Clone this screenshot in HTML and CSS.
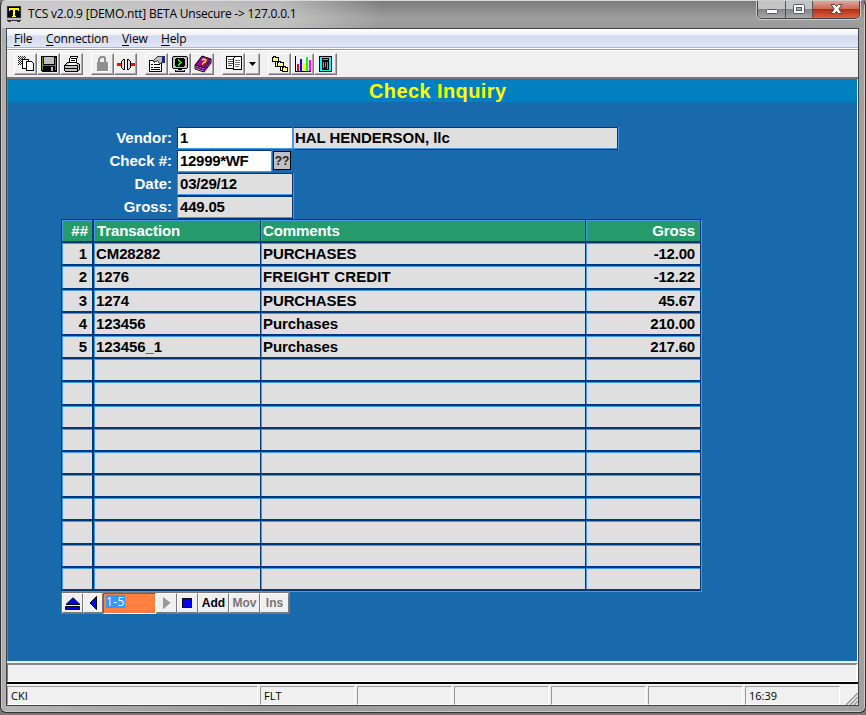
FILE: index.html
```html
<!DOCTYPE html>
<html lang="en">
<head>
<meta charset="utf-8">
<title>TCS v2.0.9</title>
<link rel="stylesheet" href="styles.css">
</head>
<body>
<div class="window">
  <header class="titlebar">
    <svg class="app-icon" width="16" height="16" viewBox="0 0 16 16" shape-rendering="crispEdges"><path fill="#333" d="M1 0h14v12H1z"/><path fill="#000" d="M2 1h12v10H2z"/><path fill="#ff0" d="M3 2h10v3h-1V4H9v6h1v1H6v-1h1V4H4v1H3z"/><path fill="#bbb" d="M0 1h1v10H0zM15 1h1v10h-1zM0 12h16v2H0z"/><path fill="#333" d="M1 14h14v1H1zM2 15h3v1H2zM11 15h3v1h-3z"/></svg>
    <span class="caption">TCS v2.0.9 [DEMO.ntt] BETA Unsecure -&gt; 127.0.0.1</span>
    <div class="controls">
      <span class="control min"><svg width="14" height="8"><rect x="1.5" y="2.5" width="11" height="4" rx="1" fill="#fff" stroke="#555868"/></svg></span>
      <span class="control max"><svg width="13" height="11"><rect x=".5" y=".5" width="11" height="9" rx="1" fill="#fff" stroke="#555868"/><rect x="3.5" y="3.5" width="5" height="3" fill="#aaa" stroke="#555868"/></svg></span>
      <span class="control close"><svg width="13" height="11" viewBox="0 0 13 11"><path d="M1 .5h3.5l2 2 2-2H12L8.8 5l3.2 4.5H8.5l-2-2-2 2H1L4.2 5z" fill="#fff" stroke="#574247"/></svg></span>
    </div>
  </header>
  <main class="client">
    <nav class="menu"><span class="m-file"><u>F</u>ile</span><span class="m-conn"><u>C</u>onnection</span><span class="m-view"><u>V</u>iew</span><span class="m-help"><u>H</u>elp</span></nav>
    <div class="toolbar">
      <div class="group">
        <button class="tool"><svg width="18" height="18" viewBox="0 0 18 18" shape-rendering="crispEdges"><path d="M1 1.500h7M2 2.500h7M1 3.500h7M2 4.500h4M1 5.500h4M2 6.500h3M1 7.500h4M2 8.500h3M1 9.500h4" stroke="#222" stroke-dasharray="1 1"/><path d="M5.500 4.500h6v9h-6z" fill="#fff" stroke="#000"/><path d="M9.500 6.500h5l2 2v7h-7z" fill="#fff" stroke="#000"/></svg></button>
        <button class="tool"><svg width="18" height="18" viewBox="0 0 18 18" shape-rendering="crispEdges"><path d="M1 1h16v16H2l-1-1z"/><path fill="#808000" d="M2 2h1v13H2zM15 3h1v12h-1zM3 10h12v1H3z"/><path fill="#c0c0c0" d="M4 2h10v7H4zM11 12h2v4h-2z"/></svg></button>
        <button class="tool"><svg width="18" height="18" viewBox="0 0 18 18" shape-rendering="crispEdges"><path d="M5.500 8.500l2-7h7l-2 7z" fill="#fff" stroke="#000"/><path d="M8 3.500h5M8 5.500h4" stroke="#000"/><path d="M1.500 10.500l3-3h9l3 2v5l-2 2h-12l-1-1z" fill="#c0c0c0" stroke="#000"/><path d="M6 8h7l-1 2H5z" fill="#fff"/><path d="M2 10.500h12v5M2 13.500h12" fill="none" stroke="#000"/><path d="M9 12h3" stroke="#cc0"/></svg></button>
      </div>
      <div class="group">
        <button class="tool"><svg width="18" height="18" viewBox="0 0 18 18" shape-rendering="crispEdges"><path fill="#909090" d="M4 3l2-2h4l2 2v4h2v9H3V7h1z"/><path fill="#eee" d="M6 4l1-1h2l1 1v3H6z"/><path d="M14.500 8v8.500H4" fill="none" stroke="#fff"/></svg></button>
        <button class="tool"><svg width="18" height="18" viewBox="0 0 18 18" shape-rendering="crispEdges"><path fill="#f00" d="M0 8h4v3H0zM14 8h4v3h-4z"/><path d="M4.500 6.500l2-2h1v10h-1l-2-2zM10.500 4.500h1l2 2v6l-2 2h-1z" fill="#ddd" stroke="#000"/></svg></button>
      </div>
      <div class="group">
        <button class="tool"><svg width="18" height="18" viewBox="0 0 18 18" shape-rendering="crispEdges"><path d="M1.500 5.500h12v11h-12z" fill="#fff" stroke="#000"/><path d="M3 9.500h2M6 9.500h6M3 12.500h2M6 12.500h6M3 14.500h9" stroke="#000"/><path d="M5.500 5.500l4-4h5v6l-3 1-2-3-3 2z" fill="#c0c0c0" stroke="#444"/><path fill="#228" d="M14 1h3v7h-3z"/></svg></button>
        <button class="tool"><svg width="18" height="18" viewBox="0 0 18 18" shape-rendering="crispEdges"><rect x="1.500" y="1.500" width="15" height="12" rx="2" fill="#c0c0c0" stroke="#000"/><rect x="4" y="3" width="10" height="9" rx="3"/><path d="M7 4.500l3 3-3 3" fill="none" stroke="#0f0"/><path fill="#000" d="M7 14h4v1H7zM4 15h10v2H4z"/><path fill="#aaa" d="M5 15h8v1H5z"/></svg></button>
        <button class="tool"><svg width="18" height="18" viewBox="0 0 18 18"><path d="M1 10L8 1l9 3-7 9z" fill="#a000a0" stroke="#000"/><path d="M1 10v4l9 3 7-9V4l-7 9z" fill="#fff" stroke="#000"/><path d="M1.500 12l8.500 3 6.500-8.500" fill="none" stroke="#800080" stroke-width="2"/><path d="M8 5l2-1 2 1-1 2-2 1M8 9h1" fill="none" stroke="#ff0" stroke-width="1.500"/></svg></button>
      </div>
      <div class="group">
        <button class="tool wide"><svg width="18" height="18" viewBox="0 0 18 18" shape-rendering="crispEdges"><path d="M1.500 1.500h8v12h-8z" fill="#fff" stroke="#000"/><path d="M3 4.500h5M3 6.500h5M3 8.500h5M3 10.500h4" stroke="#555"/><path d="M8.500 3.500l2-2h6v13h-8z" fill="#fff" stroke="#000"/><path d="M10 5.500h5M10 7.500h5M10 9.500h5M10 11.500h4" stroke="#777"/></svg></button>
        <button class="tool drop"><svg width="7" height="4"><path d="M0 0h7L3.500 4z"/></svg></button>
      </div>
      <div class="group">
        <button class="tool"><svg width="18" height="18" viewBox="0 0 18 18" shape-rendering="crispEdges"><path d="M4 7v4h3M9 11v4h3" fill="none" stroke="#000"/><path d="M1.500 2.500h1v-1h2v1h3v4h-6zM6.500 7.500h1v-1h2v1h3v4h-6zM11.500 12.500h1v-1h2v1h2v4h-5z" fill="#ff6" stroke="#000"/></svg></button>
        <button class="tool"><svg width="18" height="18" viewBox="0 0 18 18" shape-rendering="crispEdges"><path d="M1.500 1v15.500H17" fill="none" stroke="#000"/><path fill="#f00" d="M3 9h2v7H3z"/><path fill="#00f" d="M6 4h2v12H6z"/><path fill="#ff0" d="M9 8h2v8H9z"/><path fill="#0f0" d="M12 2h2v14h-2z"/><path fill="#f0f" d="M15 5h2v11h-2z"/></svg></button>
        <button class="tool"><svg width="18" height="18" viewBox="0 0 18 18" shape-rendering="crispEdges"><path d="M2 1h13v16H2z"/><path fill="#0ff" d="M3 2h11v14H3z"/><path d="M5 3h7v12H5z"/><path fill="#0cc" d="M6 4h5v1H6zM6 7h1v6H6zM8 7h1v5H8zM10 7h1v7h-1z"/></svg></button>
      </div>
    </div>
    <section class="form">
      <h1>Check Inquiry</h1>
      <div class="fields">
        <label>Vendor:</label><div class="line"><span class="field edit vendor">1</span><span class="field name">HAL HENDERSON, llc</span></div>
        <label>Check #:</label><div class="line"><span class="field edit check">12999*WF</span><span class="lookup">??</span></div>
        <label>Date:</label><div class="line"><span class="field short">03/29/12</span></div>
        <label>Gross:</label><div class="line"><span class="field short">449.05</span></div>
      </div>
      <div class="grid">
        <div class="row head"><span class="n">##</span><span class="t">Transaction</span><span>Comments</span><span class="g">Gross</span></div>
        <div class="row"><span class="n">1</span><span>CM28282</span><span>PURCHASES</span><span class="g">-12.00</span></div>
        <div class="row"><span class="n">2</span><span>1276</span><span class="loose">FREIGHT CREDIT</span><span class="g">-12.22</span></div>
        <div class="row"><span class="n">3</span><span>1274</span><span>PURCHASES</span><span class="g">45.67</span></div>
        <div class="row"><span class="n">4</span><span>123456</span><span>Purchases</span><span class="g">210.00</span></div>
        <div class="row"><span class="n">5</span><span>123456_1</span><span>Purchases</span><span class="g">217.60</span></div>
        <div class="row"><span></span><span></span><span></span><span></span></div>
        <div class="row"><span></span><span></span><span></span><span></span></div>
        <div class="row"><span></span><span></span><span></span><span></span></div>
        <div class="row"><span></span><span></span><span></span><span></span></div>
        <div class="row"><span></span><span></span><span></span><span></span></div>
        <div class="row"><span></span><span></span><span></span><span></span></div>
        <div class="row"><span></span><span></span><span></span><span></span></div>
        <div class="row"><span></span><span></span><span></span><span></span></div>
        <div class="row"><span></span><span></span><span></span><span></span></div>
        <div class="row"><span></span><span></span><span></span><span></span></div>
      </div>
      <div class="pager">
        <button class="b-top"><svg width="16" height="13"><path d="M1 7.500L8 .8l7 6.700z" fill="#00f" stroke="#000"/><path d="M.5 9.500h14v3H.5z" fill="#00f" stroke="#000"/></svg></button>
        <button class="b-prev"><svg width="9" height="14"><path d="M7.500.5v13L1 7z" fill="#00f" stroke="#000"/></svg></button>
        <div class="range"><span>1-5</span></div>
        <button class="b-next"><svg width="10" height="15"><path d="M1 1v13l8-7z" fill="#999"/><path d="M1 14l8-7" stroke="#fff"/></svg></button>
        <button class="b-stop"><svg width="11" height="11"><path d="M.5.5h9v9h-9z" fill="#00f" stroke="#000"/></svg></button>
        <button class="b-add">Add</button>
        <button class="b-mov off">Mov</button>
        <button class="b-ins off">Ins</button>
      </div>
    </section>
    <div class="message"></div>
    <footer class="status"><span>CKI</span><span>FLT</span><span></span><span></span><span></span><span></span><span>16:39</span><svg width="12" height="12" viewBox="0 0 12 12"><path d="M0 12L12 0M4 12l8-8M8 12l4-4" stroke="#999" stroke-width="1.500"/></svg></footer>
  </main>
</div>
</body>
</html>
```
FILE: styles.css
```css
* { box-sizing: border-box; }
body { margin: 0; background: #77777a; overflow: hidden; }
.window { width: 866px; height: 713px; padding: 0 6px 6px 5px; display: flex; flex-direction: column;
  background: linear-gradient(90deg, #aaa 0, #b5b5b5 6px, #999 30%, #a5a5a5 60%, #a0a0a0 100%);
  border: 1px solid #333; border-top-color: #d8dcda; border-radius: 6px; box-shadow: inset 0 0 0 1px #c8c8c8; }
.titlebar { height: 27px; flex: none; display: flex; align-items: flex-start; margin: 0 -5px 0 -4px; padding-left: 4px;
  background: linear-gradient(90deg, rgba(218,218,218,.85) 0, rgba(210,210,210,.7) 280px, rgba(150,150,150,.1) 380px, rgba(150,150,150,.1)), linear-gradient(#777, #a0a0a0 65%, #999); }
.app-icon { margin: 5px 6px 0 0; }
.caption { font: 12px/16px "Open Sans", sans-serif; padding-top: 5px; white-space: nowrap; letter-spacing: -.2px; color: #000; }
.controls { margin-left: auto; margin-right: 4px; height: 18px; width: 103px; display: flex; border: 1px solid #444; border-top: 0; border-radius: 0 0 5px 5px; box-shadow: 0 0 0 1px #ccc; overflow: hidden; }
.control { display: flex; align-items: center; justify-content: center; border-right: 1px solid #555; background: linear-gradient(#c4c4c4 45%, #858585 50%, #aaa); }
.min { width: 28px; padding-top: 2px; } .max { width: 27px; }
.close { flex: 1; border: 0; background: linear-gradient(#dda79b, #c96c57 45%, #b22f14 50%, #d9663e); }
.client { width: 853px; height: 678px; flex: none; display: flex; flex-direction: column; background: #f0f0f0; border: 1px solid #444; }
.menu { height: 21px; flex: none; display: flex; padding-left: 7px; font: 12px/20px "Open Sans", sans-serif; letter-spacing: -.15px; color: #000; border-bottom: 1px solid #999; background: linear-gradient(#fff 0, #eef1f8 6px, #d4daed 7px, #e1e6f6 18px, #aeb5cc 18px, #aeb5cc 19px, #fff 19px); }
.m-file { width: 32px; } .m-conn { width: 76px; } .m-view { width: 39px; }
u { text-underline-offset: 2px; }
.toolbar { height: 29px; flex: none; display: flex; gap: 8px; padding: 2px 0 0 7px; border-top: 1px solid #fff; border-bottom: 2px solid #777; }
.group { display: flex; }
button { font: inherit; padding: 0; margin: 0; display: flex; align-items: center; justify-content: center; background: #f0f0f0; border: 1px solid #fff; border-right-color: #777; border-bottom-color: #777; }
.tool { width: 23px; height: 22px; box-shadow: inset -1px -1px #aaa; }
.tool.drop { width: 15px; }
.form { height: 582px; flex: none; background: #186aad; border-left: 1px solid #777; border-right: 1px solid #fff; font: bold 15px/20px "Liberation Sans", sans-serif; letter-spacing: -.1px; }
h1 { margin: 0; height: 23px; font-size: 20px; line-height: 25px; letter-spacing: .4px; color: #ff0; background: #0080c0; padding-left: 361px; }
.fields { display: grid; grid-template-columns: 164px 460px; grid-template-rows: repeat(4, 23px); column-gap: 5px; height: 92px; margin-top: 25px; }
.fields label { color: #fff; text-align: right; line-height: 22px; letter-spacing: 0; }
.line { display: flex; align-items: flex-start; }
.field { height: 23px; line-height: 20px; padding-left: 2px; color: #000; background: #dfdfdf; border: 1px solid #003878; border-left: 1px solid #4398e8; border-right-color: #003878; box-shadow: 1px 0 #4398e8, inset 0 -1px #4398e8; white-space: nowrap; }
.edit { background: #fff; height: 22px; border: 1px solid #003878; border-bottom: 1px solid #4398e8; border-right-color: #4398e8; box-shadow: none; }
.vendor { width: 116px; } .check { width: 95px; letter-spacing: -.3px; } .name { width: 325px; padding-left: 1px; letter-spacing: -.05px; } .short { width: 116px; letter-spacing: -.2px; }
.lookup { width: 18px; height: 19px; margin: 1px 0 0 1px; background: #c0c0c0; border: 1px solid #000; font: bold 12px/18px "Liberation Sans", sans-serif; text-align: center; letter-spacing: 0; color: #222; }
.grid { margin-left: 53px; width: 641px; height: 373px; border: solid #003878; border-width: 1px 0 0 1px; border-right: 1px solid #4398e8; border-bottom: 1px solid #4398e8; display: grid; grid-template-rows: repeat(16, 1fr); background: #003878; }
.row { display: grid; grid-template-columns: 32px 167px 325px 115px; min-height: 0; }
.row span { margin: 0 1px 2px 0; background: #dfdfdf; border: solid #4398e8; border-width: 1px 0 0 1px; padding-left: 1px; line-height: 19px; min-height: 0; color: #000; }
.row span:first-child { margin-right: 2px; }
.row .n { text-align: right; padding-right: 5px; }
.row .g { text-align: right; padding-right: 5px; letter-spacing: -.2px; }
.row .loose { letter-spacing: .15px; }
.head span { background: #259b6c; color: #fff; }
.row.head span { letter-spacing: -.1px; }
.head .t { padding-left: 2px; }
.row.head .n { padding-right: 4px; letter-spacing: 0; }
.pager { margin: 0 0 0 53px; height: 22px; width: 229px; display: flex; background: #777; padding: 1px 0 1px 1px; font: bold 12px/18px "Liberation Sans", sans-serif; letter-spacing: .4px; }
.pager button { height: 20px; border-left: 1px solid #fff; flex: none; }
.b-top { width: 21px; } .b-prev { width: 20px; } .b-next { width: 21px; } .b-stop { width: 21px; } .b-add { width: 31px; } .b-mov { width: 31px; } .b-ins { width: 29px; }
.off { color: #777; }
.range { width: 53px; height: 21px; background: #ff8040; border: 1px solid #666; border-right-color: #fff; border-bottom-color: #fff; padding: 1px 0 0 2px; }
.range span { display: block; width: 19px; height: 13px; background: #3399ff; color: #fff; font: 12px/13px "Open Sans", sans-serif; }
.message { flex: none; height: 19px; margin-top: 2px; border-top: 2px solid #888; border-left: 1px solid #777; border-right: 2px solid #fff; border-bottom: 1px solid #fff; background: #f0f0f0; }
.status { height: 23px; flex: none; border-top: 2px solid #000; display: flex; gap: 2px; padding: 2px 0 0; font: 11px/18px "Open Sans", sans-serif; color: #000; }
.status span { width: 95px; flex: none; border: 1px solid #999; border-right-color: #fff; border-bottom-color: #fff; padding-left: 3px; }
.status span:first-child { width: 251px; }
.status svg { align-self: flex-end; margin-left: auto; }
```
